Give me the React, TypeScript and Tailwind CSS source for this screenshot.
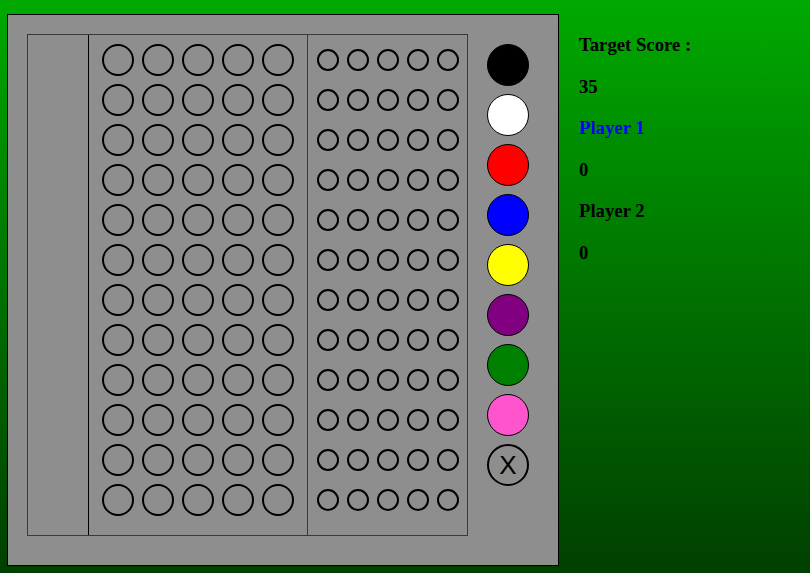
const ROWS = 12;
const palette = [
  "bg-black",
  "bg-white",
  "bg-[#ff0000]",
  "bg-[#0000ff]",
  "bg-[#ffff00]",
  "bg-[#800080]",
  "bg-[#008000]",
  "bg-[#ff55cc]",
];

function GuessRow() {
  return (
    <div className="flex gap-[8px]">
      {[0, 1, 2, 3, 4].map((i) => (
        <div key={i} className="w-[32px] h-[32px] rounded-full border-2 border-black" />
      ))}
    </div>
  );
}

function PegRow() {
  return (
    <div className="flex gap-[8px] h-[32px] items-center">
      {[0, 1, 2, 3, 4].map((i) => (
        <div key={i} className="w-[22px] h-[22px] rounded-full border-2 border-black" />
      ))}
    </div>
  );
}

export default function App() {
  const rows = Array.from({ length: ROWS });

  return (
    <div className="min-h-screen w-full bg-gradient-to-b from-[#00aa00] to-[#004000] flex items-start pt-[14px] pl-[7px]">
      {/* Board */}
      <div className="w-[552px] h-[552px] border border-black bg-[#8e8e8e] p-[19px] flex items-start">
        <div className="w-[441px] h-[502px] border border-[#3a3a3a] flex">
          <div className="w-[61px] h-full border-r border-black" />
          <div className="w-[219px] h-full border-r border-[#3a3a3a] pl-[13px] pt-[9px] flex flex-col gap-[8px]">
            {rows.map((_, i) => (
              <GuessRow key={i} />
            ))}
          </div>
          <div className="flex-1 h-full pl-[9px] pt-[9px] flex flex-col gap-[8px]">
            {rows.map((_, i) => (
              <PegRow key={i} />
            ))}
          </div>
        </div>

        {/* Colour picker */}
        <div className="ml-[19px] mt-[10px] flex flex-col gap-[8px]">
          {palette.map((c) => (
            <div key={c} className={`w-[42px] h-[42px] rounded-full border border-black ${c}`} />
          ))}
          <div
            className="w-[42px] h-[42px] rounded-full border-2 border-black flex items-center justify-center text-[26px] leading-none text-black"
            style={{ fontFamily: '"Liberation Sans", Arial, sans-serif' }}
          >
            X
          </div>
        </div>
      </div>

      {/* Scores */}
      <div
        className="ml-[20px] mt-[10px] font-bold text-[18.72px] leading-[41.5px] text-black"
        style={{ fontFamily: '"Liberation Serif", "Times New Roman", serif' }}
      >
        <div>Target Score :</div>
        <div>35</div>
        <div className="text-[#0000ff]">Player 1</div>
        <div>0</div>
        <div>Player 2</div>
        <div>0</div>
      </div>
    </div>
  );
}
